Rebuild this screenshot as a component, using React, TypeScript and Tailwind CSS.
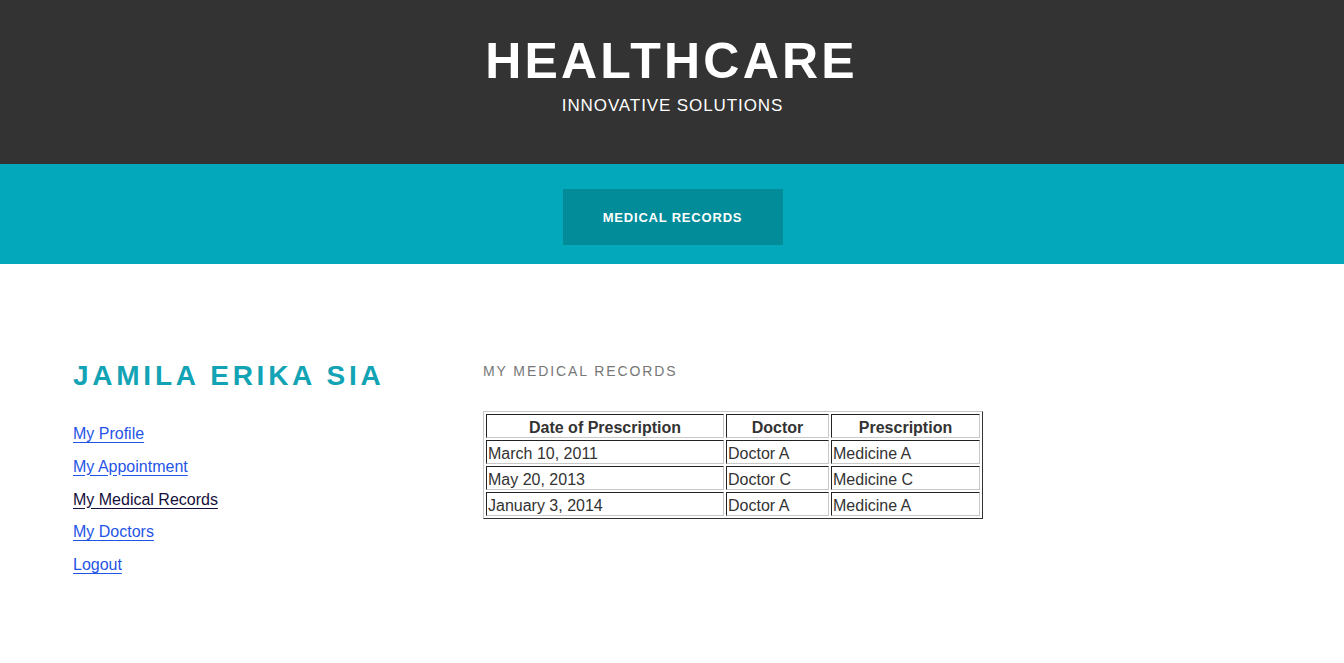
import React from "react";

const rows = [
  ["March 10, 2011", "Doctor A", "Medicine A"],
  ["May 20, 2013", "Doctor C", "Medicine C"],
  ["January 3, 2014", "Doctor A", "Medicine A"],
];

const cell =
  "border-t border-l border-t-[#222] border-l-[#222] border-b border-r border-b-[#c8c8c8] border-r-[#c8c8c8] px-px pt-[3px] pb-0 leading-[19px]";

export default function App() {
  return (
    <div className="min-h-[663px] bg-white font-['Liberation_Sans',Arial,sans-serif]">
      <header className="h-[164px] bg-[#333333] flex flex-col items-center pt-[33px]">
        <h1 className="text-[50px] leading-[56px] font-bold text-white tracking-[3.2px] pr-[1px]">HEALTHCARE</h1>
        <p className="mt-[7px] text-[17px] leading-[20px] text-white tracking-[0.9px] pl-[1px]">INNOVATIVE SOLUTIONS</p>
      </header>
      <nav className="h-[100px] bg-[#03a8bb] flex items-start justify-center pt-[25px]">
        <div className="ml-[2px] w-[220px] h-[56px] bg-[#028c9a] flex items-center justify-center pt-[1px] pr-[1px] text-[13px] font-bold text-white tracking-[0.8px]">
          MEDICAL RECORDS
        </div>
      </nav>
      <main className="flex pl-[73px] pt-[96px]">
        <aside className="w-[410px] shrink-0">
          <h2 className="text-[28px] leading-[32px] font-bold text-[#12a3b4] tracking-[3.75px]">JAMILA ERIKA SIA</h2>
          <ul className="mt-[33px] flex flex-col gap-[14.75px] text-[16px] leading-[18px]">
            <li><a href="#" className="underline underline-offset-[3px] text-[#1f55e6]">My Profile</a></li>
            <li><a href="#" className="underline underline-offset-[3px] text-[#1f55e6]">My Appointment</a></li>
            <li><a href="#" className="underline underline-offset-[3px] text-[#14103a]">My Medical Records</a></li>
            <li><a href="#" className="underline underline-offset-[3px] text-[#1f55e6]">My Doctors</a></li>
            <li><a href="#" className="underline underline-offset-[3px] text-[#1f55e6]">Logout</a></li>
          </ul>
        </aside>
        <section className="pt-[3px]">
          <h3 className="text-[14px] leading-[16px] text-[#777] tracking-[1.9px]">MY MEDICAL RECORDS</h3>
          <table className="mt-[32px] w-[500px] border-separate border-spacing-[2px] border border-t-[#c8c8c8] border-l-[#c8c8c8] border-b-[#333] border-r-[#333] text-[16px] text-[#333]">
            <thead>
              <tr>
                <th className={cell + " font-bold text-center w-[238px]"}>Date of Prescription</th>
                <th className={cell + " font-bold text-center w-[103px]"}>Doctor</th>
                <th className={cell + " font-bold text-center"}>Prescription</th>
              </tr>
            </thead>
            <tbody>
              {rows.map((r, i) => (
                <tr key={i}>
                  {r.map((c, j) => (
                    <td key={j} className={cell + " text-left"}>{c}</td>
                  ))}
                </tr>
              ))}
            </tbody>
          </table>
        </section>
      </main>
    </div>
  );
}
